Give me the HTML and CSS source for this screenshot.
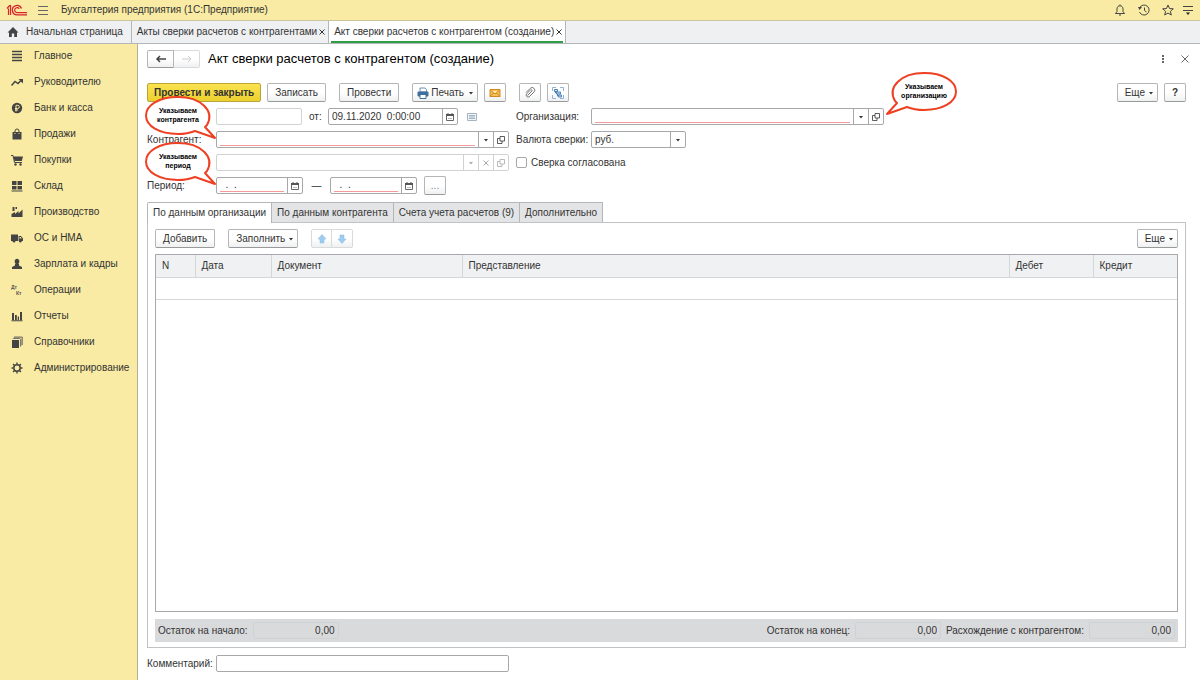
FILE: index.html
```html
<!DOCTYPE html>
<html lang="ru">
<head>
    <meta charset="UTF-8">
    <meta name="viewport" content="width=device-width, initial-scale=1.0">
    <title>Акт сверки расчетов с контрагентом (создание)</title>
    <link rel="stylesheet" href="styles.css">
</head>
<body>

    <svg class="symbols" aria-hidden="true">
        <symbol id="i-calendar" viewBox="0 0 10 10">
            <path d="M1.5 2.5h7v6h-7z" fill="none" stroke="#666"/>
            <path d="M1 2h8v2H1zM2.5 1h1v1h-1zM6.5 1h1v1h-1z" fill="#555"/>
            <path d="M3 6.5h4" stroke="#bbb"/>
        </symbol>
        <symbol id="i-open" viewBox="0 0 10 10">
            <path d="M4 1.5h4.5V6H4zM4 3.5H1.5v5H6V6" fill="none" stroke="currentColor" stroke-width=".8"/>
        </symbol>
        <symbol id="i-down" viewBox="0 0 10 10">
            <path d="M3 4h4L5 6.5z" fill="currentColor"/>
        </symbol>
        <symbol id="i-close" viewBox="0 0 10 10">
            <path d="M2.5 2.5l5 5M7.5 2.5l-5 5" fill="none" stroke="currentColor"/>
        </symbol>
        <symbol id="i-bubble" viewBox="0 0 72 44">
            <path d="M62 29C70 15 56 1 33 1C14 1 1 9 1 19.5C1 30 14 38 33 38C39 38 45 37 50 35L70 42L60 31z" fill="#fff" stroke="#ee4023" stroke-width="2" stroke-linejoin="round"/>
        </symbol>
    </svg>

    <header class="topbar">
        <svg class="logo" viewBox="0 0 22 12">
            <path d="M1 4.5L3.5 1.5H4.5V11M2.5 4.5V11" fill="none" stroke="#d8232a" stroke-width="1.2"/>
            <path d="M15.5 4.5A4.7 4.7 0 1 0 11 10.8H21" fill="none" stroke="#d8232a" stroke-width="1.3"/>
            <path d="M13.3 4.8A2.5 2.5 0 1 0 11 8.6H21" fill="none" stroke="#d8232a" stroke-width="1.2"/>
        </svg>
        <button class="plain" aria-label="Меню">
            <svg width="12" height="10" viewBox="0 0 12 10"><path d="M1 1.5h10M1 5.5h10M1 9.5h10" stroke="#666"/></svg>
        </button>
        <span class="app-name">Бухгалтерия предприятия (1С:Предприятие)</span>
        <div class="top-icons">
            <button class="plain" aria-label="Уведомления">
                <svg width="12" height="12" viewBox="0 0 12 12"><path d="M1.5 9.5h9L9 7.5V5c0-2-1.2-3.2-3-3.2S3 3 3 5v2.5zM6 .5v1.3M5 11h2" fill="none" stroke="#444"/></svg>
            </button>
            <button class="plain" aria-label="История">
                <svg width="12" height="12" viewBox="0 0 12 12"><path d="M1.8 3.5A5 5 0 1 1 1.5 8M6.5 3.5V6.5L8.5 8" fill="none" stroke="#444"/><path d="M0 3h4L1.5 6z" fill="#444"/></svg>
            </button>
            <button class="plain" aria-label="Избранное">
                <svg width="12" height="12" viewBox="0 0 12 12"><path d="M6 1l1.5 3.5 3.8.3-2.9 2.5.9 3.7L6 9l-3.3 2 .9-3.7L.7 4.8l3.8-.3z" fill="none" stroke="#444"/></svg>
            </button>
            <button class="plain" aria-label="Настройки">
                <svg width="12" height="12" viewBox="0 0 12 12"><path d="M1 2.5h10M1 6.5h10" stroke="#444"/><path d="M4 8.5h4L6 11z" fill="#222"/></svg>
            </button>
        </div>
    </header>

    <nav class="windows">
        <a class="window home" href="#">
            <svg width="12" height="12" viewBox="0 0 12 12"><path d="M6 1l5.5 5.5H10V11H7.2V7.5H4.8V11H2V6.5H.5z" fill="#444"/></svg>
            Начальная страница
        </a>
        <a class="window" href="#">Акты сверки расчетов с контрагентами <svg class="i10"><use href="#i-close"/></svg></a>
        <a class="window current" href="#">Акт сверки расчетов с контрагентом (создание) <svg class="i10"><use href="#i-close"/></svg></a>
    </nav>

    <div class="body">
        <nav class="sidebar">
            <a href="#"><svg viewBox="0 0 12 12"><path d="M1 1.5h10M1 4.5h10M1 7.5h10M1 10.5h10" stroke="#444" stroke-width="1.5"/></svg>Главное</a>
            <a href="#"><svg viewBox="0 0 12 12"><path d="M.5 9.5L4 5.5l3 2L10.5 4" fill="none" stroke="#444" stroke-width="1.5"/><path d="M7.5 3H12v4.5z" fill="#444"/></svg>Руководителю</a>
            <a href="#"><svg viewBox="0 0 12 12"><circle cx="6" cy="6" r="5.2" fill="#444"/><path d="M5 9.5V3.3h1.7a1.5 1.5 0 0 1 0 3.2H4M4 8h3" fill="none" stroke="#f9eba3"/></svg>Банк и касса</a>
            <a href="#"><svg viewBox="0 0 12 12"><path d="M1.5 4h9v7.5h-9z" fill="#444"/><path d="M4 5.5V3a2 2 0 0 1 4 0v2.5" fill="none" stroke="#444"/><path d="M4 5v1M8 5v1" stroke="#f9eba3"/></svg>Продажи</a>
            <a href="#"><svg viewBox="0 0 12 12"><path d="M0 1.5h2l1.5 7H11" fill="none" stroke="#444"/><path d="M2.5 2.5H12L10.8 7H3.5z" fill="#444"/><circle cx="4.5" cy="10.5" r="1.2" fill="#444"/><circle cx="9.5" cy="10.5" r="1.2" fill="#444"/></svg>Покупки</a>
            <a href="#"><svg viewBox="0 0 12 12"><path d="M1 1h4.5v4H1zM6.5 1H11v4H6.5zM1 6h4.5v3.5H1zM6.5 6H11v3.5H6.5zM.5 10.5h11v1H.5z" fill="#444"/></svg>Склад</a>
            <a href="#"><svg viewBox="0 0 12 12"><path d="M.5 11V8L4 6v2l3.5-3v2.5l4-4V11zM1.5 1h2v4h-2zM4.5 1H6v2H4.5z" fill="#444"/></svg>Производство</a>
            <a href="#"><svg viewBox="0 0 12 12"><path d="M0 2.5h7V9H0zM7.6 4H10l2 2.5V9H7.6z" fill="#444"/><path d="M8.5 5h1.2l1 1.5H8.5z" fill="#f9eba3"/><circle cx="3" cy="9.3" r="1.3" fill="#444"/><circle cx="9.3" cy="9.3" r="1.3" fill="#444"/></svg>ОС и НМА</a>
            <a href="#"><svg viewBox="0 0 12 12"><ellipse cx="6" cy="3.5" rx="2.3" ry="2.8" fill="#444"/><path d="M1 11V9l3-1.5V6h4v1.5L11 9v2z" fill="#444"/></svg>Зарплата и кадры</a>
            <a href="#"><svg class="dtkt" viewBox="0 0 12 12"><text x="0" y="5">Дт</text><text x="5" y="11">Кт</text></svg>Операции</a>
            <a href="#"><svg viewBox="0 0 12 12"><path d="M1 3h2v7H1zM4 5h1.8v5H4zM6.7 6.5H8V10H6.7zM9 2h2v8H9zM.5 10.3h11v.9H.5z" fill="#444"/></svg>Отчеты</a>
            <a href="#"><svg viewBox="0 0 12 12"><path d="M1 4h7v8H1z" fill="#444"/><path d="M1.5 3L3 1.5h7L8.5 3zM9 3.5L10.5 2v7.5L9 11z" fill="#777"/><path d="M3 1h8.3v8" fill="none" stroke="#555" stroke-width=".8"/></svg>Справочники</a>
            <a href="#"><svg viewBox="0 0 12 12"><circle cx="6" cy="6" r="3.2" fill="none" stroke="#444" stroke-width="1.5"/><path d="M6 .5v2M6 9.5v2M.5 6h2M9.5 6h2M2.1 2.1l1.4 1.4M8.5 8.5l1.4 1.4M2.1 9.9l1.4-1.4M8.5 3.5l1.4-1.4" stroke="#444" stroke-width="1.4"/></svg>Администрирование</a>
        </nav>

        <main class="main">
            <div class="title-row">
                <div class="pair">
                    <button class="btn" aria-label="Назад"><svg width="12" height="10" viewBox="0 0 12 10"><path d="M11 5H2M5 2L2 5l3 3" fill="none" stroke="#444" stroke-width="1.5"/></svg></button>
                    <button class="btn" aria-label="Вперед" disabled><svg width="12" height="10" viewBox="0 0 12 10"><path d="M1 5h9M7 2l3 3-3 3" fill="none" stroke="#ccc"/></svg></button>
                </div>
                <h1>Акт сверки расчетов с контрагентом (создание)</h1>
                <button class="plain push" aria-label="Еще действия"><svg width="10" height="10" viewBox="0 0 10 10"><path d="M4 1h2v2H4zM4 4h2v2H4zM4 7h2v2H4z" fill="#666"/></svg></button>
                <button class="plain" aria-label="Закрыть"><svg width="10" height="10" viewBox="0 0 10 10"><path d="M1.5 1.5l7 7M8.5 1.5l-7 7" stroke="#666"/></svg></button>
            </div>

            <div class="commands">
                <div class="group">
                    <button class="btn primary">Провести и закрыть</button>
                    <button class="btn">Записать</button>
                </div>
                <button class="btn">Провести</button>
                <div class="group">
                    <button class="btn print">
                        <svg width="12" height="12" viewBox="0 0 12 12"><path d="M3 1h5l1.5 1.5V5H3z" fill="#fff" stroke="#6b8fb3"/><rect x=".5" y="4.5" width="11" height="5" rx="1" fill="#3f6f9f"/><path d="M3 7.5h6v4H3z" fill="#fff" stroke="#3f6f9f"/></svg>
                        Печать
                        <svg class="i10"><use href="#i-down"/></svg>
                    </button>
                    <button class="btn square" aria-label="Отправить по почте"><svg width="12" height="10" viewBox="0 0 12 10"><path d="M1 1.5h10v7H1z" fill="#f6c25b" stroke="#d38b1d"/><path d="M1 8.5L4.5 5M11 8.5L7.5 5M1 2l5 4 5-4" fill="none" stroke="#d38b1d"/><path d="M3.5 3.2h5L6 5z" fill="#fff3d0"/></svg></button>
                </div>
                <div class="group">
                    <button class="btn square" aria-label="Файлы"><svg width="12" height="12" viewBox="0 0 12 12"><path d="M3.5 8.5L8 4a1 1 0 0 0-1.3-1.3L2.5 7a2 2 0 0 0 2.7 2.8L10 5A2.6 2.6 0 0 0 6.3 1.3L2 5.6" fill="none" stroke="#777"/></svg></button>
                    <button class="btn square" aria-label="Структура подчиненности"><svg width="12" height="12" viewBox="0 0 12 12"><path d="M.5 4V.5H4M8 .5h3.5V4M.5 8v3.5H4M11.5 8v3.5H8" fill="none" stroke="#8fb4d8"/><path d="M2.5 2.5h3v2h-3zM4.5 5h4v2h-4zM6.5 8h3v2h-3zM3.5 4.5V6h1M5.5 7v2h1" fill="#cfe0f0" stroke="#4c82b8"/></svg></button>
                </div>
                <div class="group push">
                    <button class="btn more">Еще <svg class="i10"><use href="#i-down"/></svg></button>
                    <button class="btn square help">?</button>
                </div>
            </div>

            <form class="form" onsubmit="return false">
                <div class="label">
                    <div class="callout"><svg><use href="#i-bubble"/></svg><span>Указываем<br>контрагента</span></div>
                </div>
                <div class="line">
                    <input class="box pale w86" type="text" aria-label="Номер">
                    <label class="from" for="doc-date">от:</label>
                    <div class="box w130">
                        <input id="doc-date" type="text" value="09.11.2020  0:00:00">
                        <button type="button" aria-label="Выбрать дату"><svg class="i10"><use href="#i-calendar"/></svg></button>
                    </div>
                    <svg class="note" width="10" height="8" viewBox="0 0 10 8"><path d="M.5.5h9v7h-9z" fill="#eef4f8" stroke="#a3b5c2"/><path d="M2 2.5h6M2 4h6M2 5.5h6" stroke="#a3b5c2"/></svg>
                </div>
                <label class="label second" for="org">Организация:</label>
                <div class="line">
                    <div class="box full required">
                        <input id="org" type="text">
                        <button type="button" aria-label="Выбрать организацию"><svg class="i10"><use href="#i-down"/></svg></button>
                        <button type="button" aria-label="Открыть организацию"><svg class="i10"><use href="#i-open"/></svg></button>
                    </div>
                    <div class="callout mirrored"><svg><use href="#i-bubble"/></svg><span>Указываем<br>организацию</span></div>
                </div>

                <label class="label" for="partner">Контрагент:</label>
                <div class="box required">
                    <input id="partner" type="text">
                    <button type="button" aria-label="Выбрать контрагента"><svg class="i10"><use href="#i-down"/></svg></button>
                    <button type="button" aria-label="Открыть контрагента"><svg class="i10"><use href="#i-open"/></svg></button>
                </div>
                <label class="label second" for="currency">Валюта сверки:</label>
                <div class="box currency">
                    <select id="currency"><option>руб.</option></select>
                    <span class="arrow"><svg class="i10"><use href="#i-down"/></svg></span>
                </div>

                <div class="label">
                    <div class="callout"><svg><use href="#i-bubble"/></svg><span>Указываем<br>период</span></div>
                </div>
                <div class="box pale">
                    <input type="text" aria-label="Договор" disabled>
                    <button type="button" aria-label="Выбрать договор" disabled><svg class="i10"><use href="#i-down"/></svg></button>
                    <button type="button" aria-label="Очистить договор" disabled><svg class="i10"><use href="#i-close"/></svg></button>
                    <button type="button" aria-label="Открыть договор" disabled><svg class="i10"><use href="#i-open"/></svg></button>
                </div>
                <label class="agreed"><input type="checkbox"> Сверка согласована</label>

                <label class="label" for="period-from">Период:</label>
                <div class="line">
                    <div class="box required w87">
                        <input id="period-from" type="text" value="  .  .">
                        <button type="button" aria-label="Начало периода"><svg class="i10"><use href="#i-calendar"/></svg></button>
                    </div>
                    <span class="dash">—</span>
                    <div class="box required w87">
                        <input type="text" value="  .  ." aria-label="Конец периода">
                        <button type="button" aria-label="Выбрать конец периода"><svg class="i10"><use href="#i-calendar"/></svg></button>
                    </div>
                    <button type="button" class="btn square dots">...</button>
                </div>
            </form>

            <div class="tabs">
                <button class="tab active">По данным организации</button>
                <button class="tab">По данным контрагента</button>
                <button class="tab">Счета учета расчетов (9)</button>
                <button class="tab">Дополнительно</button>
            </div>
            <section class="panel">
                <div class="commands">
                    <button class="btn">Добавить</button>
                    <button class="btn more">Заполнить <svg class="i10"><use href="#i-down"/></svg></button>
                    <div class="pair arrows">
                        <button class="btn" aria-label="Вверх"><svg width="10" height="10" viewBox="0 0 10 10"><path d="M5 .5L9 5H7v4H3V5H1z" fill="#9fcdf0" stroke="#86b6dc" stroke-width=".5"/></svg></button>
                        <button class="btn" aria-label="Вниз"><svg width="10" height="10" viewBox="0 0 10 10"><path d="M5 9.5L9 5H7V1H3v4H1z" fill="#9fcdf0" stroke="#86b6dc" stroke-width=".5"/></svg></button>
                    </div>
                    <button class="btn more push">Еще <svg class="i10"><use href="#i-down"/></svg></button>
                </div>
                <div class="table-box">
                    <table>
                        <thead>
                            <tr>
                                <th class="c-n">N</th>
                                <th class="c-date">Дата</th>
                                <th class="c-doc">Документ</th>
                                <th>Представление</th>
                                <th class="c-sum">Дебет</th>
                                <th class="c-sum">Кредит</th>
                            </tr>
                        </thead>
                        <tbody>
                            <tr><td colspan="6"></td></tr>
                        </tbody>
                    </table>
                </div>
                <div class="totals">
                    <label for="sum-start">Остаток на начало:</label>
                    <input id="sum-start" type="text" value="0,00" readonly>
                    <label class="push" for="sum-end">Остаток на конец:</label>
                    <input id="sum-end" type="text" value="0,00" readonly>
                    <label for="sum-diff">Расхождение с контрагентом:</label>
                    <input id="sum-diff" type="text" value="0,00" readonly>
                </div>
            </section>

            <div class="comment">
                <label for="comment">Комментарий:</label>
                <input class="box" id="comment" type="text">
            </div>
        </main>
    </div>

</body>
</html>
```
FILE: styles.css
```css
* {
    box-sizing: border-box;
}

body {
    margin: 0;
    min-height: 100vh;
    display: flex;
    flex-direction: column;
    font-family: "Liberation Sans", Arial, sans-serif;
    font-size: 10px;
    line-height: 12px;
    color: #333;
    background: #fff;
}

a {
    color: inherit;
    text-decoration: none;
}

button, input, select {
    font: inherit;
    color: inherit;
    margin: 0;
}

svg {
    flex: none;
}

.symbols {
    position: absolute;
    width: 0;
    height: 0;
}

.i10 {
    width: 10px;
    height: 10px;
}

.push {
    margin-left: auto;
}

.plain {
    display: flex;
    padding: 0;
    border: 0;
    background: none;
}

/* верхняя панель */
.topbar {
    display: flex;
    align-items: center;
    height: 21px;
    padding: 0 6px;
    background: #f9eba3;
    border-bottom: 1px solid #c9c3a0;
}

.logo {
    width: 22px;
    height: 12px;
    margin-right: 9px;
}

.app-name {
    margin-left: 12px;
}

.top-icons {
    display: flex;
    gap: 12px;
    margin-left: auto;
}

.top-icons .plain:last-child {
    margin-left: -4px;
}

.windows {
    display: flex;
    height: 23px;
    background: #eff0f2;
    border-bottom: 1px solid #b4b6b9;
}

.window {
    display: flex;
    align-items: center;
    padding: 0 1px 0 5px;
    border-right: 1px solid #b4b6b9;
}

.window.home {
    gap: 7px;
    padding: 0 8px 0 7px;
}

.window.current {
    background: #fff;
    box-shadow: inset 2px 0 #fff, inset -2px 0 #fff, inset 0 -2px #2f9e44;
}

.body {
    flex: 1;
    display: flex;
}

.sidebar {
    width: 138px;
    flex: none;
    background: #f9eba3;
    border-right: 1px solid #b5b09a;
}

.sidebar a {
    display: flex;
    align-items: center;
    gap: 11px;
    height: 26px;
    padding: 0 0 2px 11px;
}

.sidebar svg {
    width: 12px;
    height: 12px;
}

.dtkt {
    font-size: 5px;
    font-weight: bold;
    fill: #555;
}

.main {
    flex: 1;
    display: flex;
    flex-direction: column;
    min-width: 0;
    padding: 6px 14px 8px 9px;
}

/* кнопки */
.btn {
    display: flex;
    align-items: center;
    justify-content: center;
    height: 19px;
    padding: 0 7px;
    border: 1px solid #b3b5b8;
    border-bottom-color: #999;
    border-radius: 2px;
    background: linear-gradient(#fff 50%, #eff0f1);
    white-space: nowrap;
}

.btn.primary {
    padding: 0 6px;
    font-weight: bold;
    background: linear-gradient(#fbe34f, #ecd02f);
    border-color: #b9a43a;
}

.btn.square {
    width: 22px;
    padding: 0;
}

.btn.more {
    padding-right: 1px;
    gap: 1px;
}

.btn.print {
    gap: 2px;
    padding: 0 1px 0 4px;
}

.btn.help {
    font-weight: bold;
}

.btn.dots {
    margin-left: 7px;
    color: #888;
}

.pair {
    display: flex;
}

.pair .btn {
    width: 27px;
    padding: 0;
    border-radius: 2px 0 0 2px;
}

.pair .btn + .btn {
    width: 26px;
    border-left: 0;
    border-radius: 0 2px 2px 0;
}

.pair .btn:disabled,
.arrows .btn {
    border-color: #d8dadc;
}

.pair.arrows .btn {
    width: 21px;
}

.title-row {
    display: flex;
    align-items: center;
    height: 18px;
    gap: 8px;
}

.title-row .btn {
    height: 18px;
}

.title-row .plain + .plain {
    margin-left: 4px;
    margin-right: -4px;
}

h1 {
    margin: 0;
    font-size: 13px;
    line-height: 18px;
    font-weight: normal;
    color: #000;
}

.commands {
    display: flex;
    gap: 13px;
}

.title-row + .commands {
    margin-top: 15px;
}

.group {
    display: flex;
    gap: 6px;
}

/* поля формы */
.form {
    display: grid;
    grid-template-columns: 69px 293px 82px 293px;
    grid-auto-rows: 17px;
    row-gap: 6px;
    margin-top: 6px;
}

.label {
    position: relative;
    line-height: 17px;
    white-space: nowrap;
}

.label.second {
    padding-left: 7px;
}

.line {
    position: relative;
    display: flex;
    align-items: center;
}

.box {
    display: flex;
    height: 17px;
    border: 1px solid #a6a8ab;
    border-radius: 2px;
    background: #fff;
}

.box.pale {
    border-color: #d0d2d4;
}

.box input, .box select {
    flex: 1;
    width: 0;
    min-width: 0;
    padding: 0 3px;
    border: 0;
    background: none;
    white-space: pre;
    appearance: none;
}

.box.required input {
    margin: 0 3px 1px;
    padding: 0;
    border-bottom: 1px solid #f49a9a;
}

.box button, .arrow {
    display: flex;
    align-items: center;
    justify-content: center;
    width: 15px;
    padding: 0;
    border: 0;
    border-left: 1px solid #a6a8ab;
    background: none;
}

.box.pale button {
    color: #aaa;
    border-color: #d0d2d4;
}

.full {
    flex: 1;
}

.w86 {
    width: 86px;
}

.w87 {
    width: 87px;
}

.w130 {
    width: 130px;
}

.from {
    width: 26px;
    padding-left: 7px;
}

.note {
    margin-left: 9px;
}

.currency {
    width: 95px;
}

.agreed {
    grid-column: 3 / 5;
    display: flex;
    align-items: center;
    gap: 4px;
    padding-left: 7px;
}

.agreed input {
    appearance: none;
    width: 11px;
    height: 11px;
    border: 1px solid #a6a8ab;
    border-radius: 2px;
    background: #fff;
}

.dash {
    width: 27px;
    text-align: center;
}

/* выноски поверх формы */
.callout {
    position: absolute;
    z-index: 1;
    left: -2px;
    top: -12px;
    width: 72px;
    height: 44px;
    color: #000;
    font-size: 7px;
    font-weight: bold;
    line-height: 9px;
    text-align: center;
}

.callout svg {
    position: absolute;
    left: 0;
    top: 0;
    width: 72px;
    height: 44px;
}

.callout span {
    position: relative;
    display: block;
    width: 66px;
    padding-top: 10px;
}

.callout.mirrored {
    left: 294px;
    top: -36px;
}

.callout.mirrored svg {
    transform: scaleX(-1);
}

.callout.mirrored span {
    margin-left: 6px;
}

/* закладки и таблица */
.tabs {
    display: flex;
    margin-top: 8px;
}

.tab {
    height: 20px;
    padding: 0 5px;
    border: 1px solid #b4b6b9;
    border-left: 0;
    border-bottom: 0;
    background: #e3e4e6;
}

.tab.active {
    position: relative;
    margin-bottom: -1px;
    height: 21px;
    border-left: 1px solid #b4b6b9;
    border-radius: 2px 0 0 0;
    background: #fff;
}

.panel {
    flex: 1;
    display: flex;
    flex-direction: column;
    padding: 6px 7px 5px;
    border: 1px solid #c0c2c4;
}

.table-box {
    flex: 1;
    margin: 6px 0 7px;
    border: 1px solid #a6a8ab;
}

table {
    width: 100%;
    table-layout: fixed;
    border-collapse: collapse;
}

th, td {
    height: 22px;
    padding: 0 6px;
    border-bottom: 1px solid #d5d6d8;
    text-align: left;
    font-weight: normal;
}

th {
    background: #f0f1f2;
    border-right: 1px solid #d5d6d8;
}

th:last-child {
    border-right: 0;
}

.c-n {
    width: 39px;
}

.c-date {
    width: 76px;
}

.c-doc {
    width: 191px;
}

.c-sum {
    width: 84px;
}

.totals {
    display: flex;
    align-items: center;
    gap: 5px;
    height: 23px;
    padding: 0 3px;
    background: #d9dadc;
}

.totals input {
    width: 86px;
    height: 17px;
    padding: 0 3px;
    border: 1px solid #d0d1d3;
    border-radius: 2px;
    background: none;
    text-align: right;
}

.comment {
    display: flex;
    align-items: center;
    margin-top: 7px;
}

.comment label {
    width: 69px;
}

.comment .box {
    width: 293px;
    padding: 0 3px;
}
```
